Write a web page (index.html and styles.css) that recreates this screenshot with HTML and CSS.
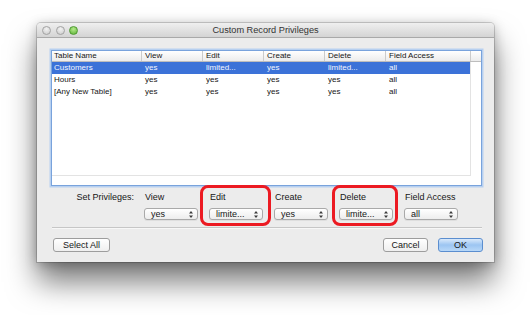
FILE: index.html
```html
<!DOCTYPE html>
<html>
  <head>
    <title>Custom Record Privileges</title>
    <meta charset="utf-8" />
    <meta name="viewport" content="width=device-width, initial-scale=1" />
    <link rel="stylesheet" href="styles.css">
  </head>
  <body>
    <div class="window">
      <!-- title bar -->
      <div class="titlebar">
        <div class="lights">
          <span class="light"></span>
          <span class="light"></span>
          <span class="light green"></span>
        </div>
        <div class="title">Custom Record Privileges</div>
      </div>

      <div class="content">
        <!-- table list -->
        <div class="list">
          <div class="list-head">
            <div>Table Name</div>
            <div>View</div>
            <div>Edit</div>
            <div>Create</div>
            <div>Delete</div>
            <div>Field Access</div>
            <div></div>
          </div>
          <div class="list-body">
            <div class="row selected">
              <div>Customers</div>
              <div>yes</div>
              <div>limited...</div>
              <div>yes</div>
              <div>limited...</div>
              <div>all</div>
            </div>
            <div class="row">
              <div>Hours</div>
              <div>yes</div>
              <div>yes</div>
              <div>yes</div>
              <div>yes</div>
              <div>all</div>
            </div>
            <div class="row">
              <div>[Any New Table]</div>
              <div>yes</div>
              <div>yes</div>
              <div>yes</div>
              <div>yes</div>
              <div>all</div>
            </div>
          </div>
        </div>

        <!-- privileges -->
        <div class="privileges">
          <div class="set-label">Set Privileges:</div>
          <div class="field">
            <div class="field-label">View</div>
            <div class="popup">
              <span>yes</span>
              <svg width="4" height="7" viewBox="0 0 4 7"><path d="M2 0L4 2.6H0Z M0 4.4H4L2 7Z" fill="#3a3a3a"/></svg>
            </div>
          </div>
          <div class="field marked" id="editField">
            <div class="field-label">Edit</div>
            <div class="popup">
              <span>limite...</span>
              <svg width="4" height="7" viewBox="0 0 4 7"><path d="M2 0L4 2.6H0Z M0 4.4H4L2 7Z" fill="#3a3a3a"/></svg>
            </div>
          </div>
          <div class="field">
            <div class="field-label">Create</div>
            <div class="popup">
              <span>yes</span>
              <svg width="4" height="7" viewBox="0 0 4 7"><path d="M2 0L4 2.6H0Z M0 4.4H4L2 7Z" fill="#3a3a3a"/></svg>
            </div>
          </div>
          <div class="field marked" id="deleteField">
            <div class="field-label">Delete</div>
            <div class="popup">
              <span>limite...</span>
              <svg width="4" height="7" viewBox="0 0 4 7"><path d="M2 0L4 2.6H0Z M0 4.4H4L2 7Z" fill="#3a3a3a"/></svg>
            </div>
          </div>
          <div class="field">
            <div class="field-label">Field Access</div>
            <div class="popup">
              <span>all</span>
              <svg width="4" height="7" viewBox="0 0 4 7"><path d="M2 0L4 2.6H0Z M0 4.4H4L2 7Z" fill="#3a3a3a"/></svg>
            </div>
          </div>
        </div>

        <div class="separator"></div>

        <!-- buttons -->
        <div class="buttons">
          <div class="button" id="selectAll">Select All</div>
          <div class="button" id="cancel">Cancel</div>
          <div class="button default" id="ok">OK</div>
        </div>
      </div>
    </div>
  </body>
</html>
```

FILE: styles.css
```css
html {
  overflow: hidden;
}

body {
  margin: 0;
  min-height: 315px;
  padding-top: 23px;
  box-sizing: border-box;
  background: #fff;
  color: #161616;
  font-family: "Liberation Sans", Arial, sans-serif;
}

.window {
  width: 457px;
  margin-left: 37px;
  background: #ececec;
  border-radius: 4px 4px 0 0;
  box-shadow: 0 0 0 1px rgba(0, 0, 0, 0.16), 0 20px 30px rgba(0, 0, 0, 0.52),
    0 2px 12px rgba(0, 0, 0, 0.26);
}

.titlebar {
  display: grid;
  align-items: center;
  height: 14px;
  padding: 0 5px;
  border-bottom: 1px solid #a9a9a9;
  border-radius: 4px 4px 0 0;
  background: linear-gradient(#efefef, #d4d4d4);
}

.lights,
.title {
  grid-area: 1 / 1;
}

.lights {
  display: flex;
  gap: 4.5px;
}

.light {
  width: 7px;
  height: 7px;
  border-radius: 50%;
  border: 1px solid #a3a3a3;
  background: radial-gradient(circle at 50% 30%, #f2f2f2, #cacaca);
}

.light.green {
  border-color: #4f9a32;
  background: radial-gradient(circle at 50% 30%, #b6ea8c, #5cb336);
}

.title {
  justify-self: center;
  font-size: 9.2px;
  color: #333;
}

.content {
  padding: 12px 12px 10px 14px;
}

/* list */
.list {
  height: 136px;
  box-sizing: border-box;
  background: #fff;
  border: 1px solid #79a3dc;
  box-shadow: 0 0 0 1.5px #b7d0f0;
  font-size: 8px;
}

.list-head {
  display: grid;
  grid-template-columns: 89px 61px 61px 61px 61px 85px 11px;
  height: 10px;
  line-height: 10px;
  border-bottom: 1px solid #bdbdbd;
  background: linear-gradient(#ffffff, #ececec);
}

.list-head div {
  border-left: 1px solid #cbcbcb;
  padding-left: 3px;
}

.list-head div:first-child {
  border-left: 0;
  padding-left: 2px;
}

.list-body {
  width: 418px;
  height: 113px;
  border-right: 1px solid #e3e3e3;
  border-bottom: 1px solid #e3e3e3;
}

.row {
  display: grid;
  grid-template-columns: 89px 61px 61px 61px 61px 85px;
  height: 12px;
  line-height: 12px;
}

.row div {
  padding-left: 4px;
  white-space: nowrap;
}

.row div:first-child {
  padding-left: 2px;
}

.row.selected {
  background: #3b72d8;
  color: #f2f6ff;
}

/* privileges */
.privileges {
  display: flex;
  margin-top: 6px;
  font-size: 9px;
}

.set-label {
  width: 83px;
  margin-right: 10px;
  text-align: right;
  line-height: 11px;
}

.field {
  position: relative;
  width: 54px;
  margin-right: 11px;
}

.field:last-child {
  margin-right: 0;
}

.field-label {
  line-height: 11px;
  padding-left: 1px;
  white-space: nowrap;
}

.popup {
  display: flex;
  align-items: center;
  justify-content: space-between;
  height: 12px;
  margin-top: 5px;
  padding: 0 4px 0 6px;
  box-sizing: border-box;
  border: 1px solid #a9a9a9;
  border-radius: 3px;
  background: linear-gradient(#ffffff, #ededed);
  box-shadow: 0 1px 0 rgba(0, 0, 0, 0.06);
  line-height: 10px;
}

.field.marked::after {
  content: "";
  position: absolute;
  top: -7px;
  bottom: -6px;
  left: -9px;
  right: -8px;
  border: 3px solid #ec1a22;
  border-radius: 8px;
}

#deleteField::after {
  left: -7px;
  right: -5px;
}

.separator {
  height: 1px;
  margin: 7px 0 0 1px;
  background: #c6c6c6;
  border-bottom: 1px solid #f7f7f7;
}

/* buttons */
.buttons {
  display: flex;
  margin-top: 9px;
  padding-left: 2px;
  margin-right: -1px;
}

.button {
  height: 14px;
  box-sizing: border-box;
  border: 1px solid #9d9d9d;
  border-radius: 3px;
  background: linear-gradient(#ffffff, #efefef);
  font-size: 9px;
  line-height: 12px;
  text-align: center;
}

#selectAll {
  width: 57px;
}

#cancel {
  width: 45px;
  margin-left: auto;
  margin-right: 10px;
}

#ok {
  width: 45px;
}

.button.default {
  border-color: #5b8ecf;
  background: linear-gradient(#d9e9fb, #9cc5f2 50%, #b8d8f8);
}
```
